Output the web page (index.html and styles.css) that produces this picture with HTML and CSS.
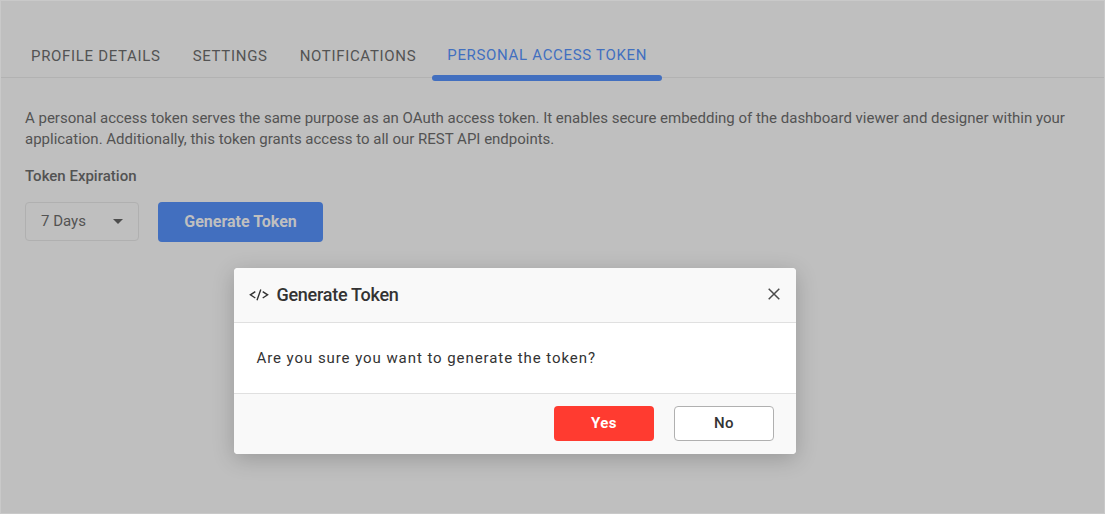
FILE: index.html
```
<!DOCTYPE html>
<html lang="en">
<head>
<meta charset="utf-8">
<title>Personal Access Token</title>
<link rel="stylesheet" href="styles.css">
</head>
<body>
<main class="page">
  <nav class="tabs">
    <a class="tab">PROFILE DETAILS</a>
    <a class="tab">SETTINGS</a>
    <a class="tab">NOTIFICATIONS</a>
    <a class="tab active">PERSONAL ACCESS TOKEN</a>
  </nav>
  <section class="content">
    <p class="intro">A personal access token serves the same purpose as an OAuth access token. It enables secure embedding of the dashboard viewer and designer within your<br>application. Additionally, this token grants access to all our REST API endpoints.</p>
    <div class="label"><span>Token Expiration</span></div>
    <div class="controls">
      <div class="select"><span>7 Days</span><svg width="10" height="5" viewBox="0 0 10 5"><path d="M0 0H10L5 5Z" fill="#4d4d4d"/></svg></div>
      <button class="generate"><span>Generate Token</span></button>
    </div>
  </section>
</main>
<div class="dialog" role="dialog">
  <header class="dialog-head">
    <svg class="code" width="20" height="12" viewBox="0 0 20 12" fill="none" stroke="#333" stroke-width="1.4"><path d="M6.3 2.6L1.4 5.8L6.3 9M11.8 .5L8 11.2M13.7 2.6L18.6 5.8L13.7 9"/></svg>
    <h2><span>Generate Token</span></h2>
    <svg class="close" width="12" height="12" viewBox="0 0 12 12" fill="none" stroke="#4b4b4b" stroke-width="1.5"><path d="M.7 .7L11.3 11.3M11.3 .7L.7 11.3"/></svg>
  </header>
  <div class="dialog-body"><span>Are you sure you want to generate the token?</span></div>
  <footer class="dialog-foot">
    <button class="btn yes">Yes</button>
    <button class="btn no">No</button>
  </footer>
</div>
</body>
</html>
```
FILE: styles.css
```
* { box-sizing: border-box; }
body { margin: 0; font-family: Roboto, "Liberation Sans", sans-serif; background: #bfbfbf; }
button { font-family: inherit; padding: 0; }
.page { height: 514px; border: 1px solid #c9c9c9; background: #bfbfbf; color: #535353; overflow: hidden; }
.tabs { display: flex; height: 77px; padding: 33px 0 0 14px; border-bottom: 1px solid #b2b2b2; white-space: nowrap; }
.tab { height: 47px; padding: 12px 16px 0; font-size: 15px; line-height: 20px; font-weight: 450; letter-spacing: .68px; }
.tab.active { width: 230px; padding: 11px 0 0 15px; color: #426fbf; position: relative; }
.tab.active::after { content: ""; position: absolute; left: 0; right: 0; bottom: 0; height: 6px; border-radius: 3px; background: #426fbf; }
.content { padding: 30px 24px 0; }
.intro { margin: 0; font-size: 15px; line-height: 21px; letter-spacing: -.006px; white-space: nowrap; }
.label { margin-top: 16px; font-size: 15px; line-height: 20px; font-weight: 500; }
.controls { display: flex; gap: 19px; margin-top: 16px; }
.select { width: 114px; height: 39px; padding: 0 15px; border: 1px solid #b0b0b0; border-radius: 4px; display: flex; align-items: center; justify-content: space-between; font-size: 15px; }
.select span { padding-bottom: 2px; }
.generate { width: 165px; height: 40px; padding-bottom: 1px; border: 0; border-radius: 4px; background: #426fbf; color: #bfbfbf; font-size: 16px; font-weight: 700; }
.dialog { position: absolute; left: 234px; top: 268px; width: 562px; height: 186px; border-radius: 4px; background: #fff; color: #333; overflow: hidden; box-shadow: 0 5px 22px rgba(0,0,0,.2); }
.dialog-head { display: flex; align-items: center; height: 55px; padding: 0 16px 0 14.5px; background: #f9f9f9; border-bottom: 1px solid #e0e0e0; }
.dialog-head h2 { margin: 0 auto 0 8px; font-size: 18px; line-height: 24px; font-weight: 500; letter-spacing: -.27px; }
.code { margin-bottom: 1px; }
.close { margin-bottom: 2px; }
.dialog-body { height: 70px; padding: 25px 22.5px; font-size: 15px; line-height: 20px; letter-spacing: .93px; }
.dialog-foot { display: flex; justify-content: flex-end; gap: 20px; height: 61px; padding: 12px 22px; background: #f9f9f9; border-top: 1px solid #e0e0e0; }
.btn { width: 100px; height: 35px; padding-bottom: 2px; border-radius: 4px; font-size: 15px; font-weight: 500; letter-spacing: .5px; }
.yes { background: #ff3b30; border: 0; color: #fff; font-weight: 700; }
.no { background: #fff; border: 1px solid #b0b0b0; color: #333; }
```
